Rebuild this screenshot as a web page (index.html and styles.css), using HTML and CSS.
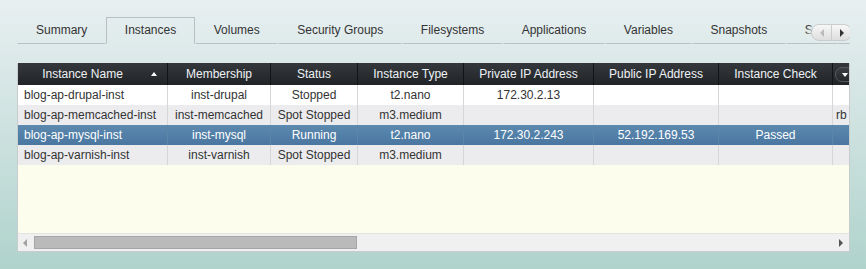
FILE: index.html
```html
<!DOCTYPE html>
<html lang="en">
<head>
    <meta charset="UTF-8">
    <title>Instances</title>
    <link rel="stylesheet" href="styles.css">
</head>
<body>
<div class="panel">
    <div class="tabbar">
        <div class="tabs">
            <div class="tab">Summary</div>
            <div class="tab active">Instances</div>
            <div class="tab">Volumes</div>
            <div class="tab">Security Groups</div>
            <div class="tab">Filesystems</div>
            <div class="tab">Applications</div>
            <div class="tab">Variables</div>
            <div class="tab">Snapshots</div>
            <div class="tab">Se</div>
            <div class="tab-fill"></div>
        </div>
        <div class="tab-scroller">
            <span class="scroll-btn"><i class="tri left"></i></span>
            <span class="scroll-btn"><i class="tri right"></i></span>
        </div>
    </div>

    <div class="grid">
        <div class="grid-view">
            <table>
                <colgroup>
                    <col style="width:150px"><col style="width:103px"><col style="width:87px">
                    <col style="width:106px"><col style="width:130px"><col style="width:125px">
                    <col style="width:114px"><col style="width:17px">
                </colgroup>
                <thead>
                    <tr>
                        <th><div class="th-sort"><span>Instance Name</span><i class="sort-up"></i></div></th>
                        <th>Membership</th>
                        <th>Status</th>
                        <th>Instance Type</th>
                        <th>Private IP Address</th>
                        <th>Public IP Address</th>
                        <th>Instance Check</th>
                        <th></th>
                    </tr>
                </thead>
                <tbody>
                    <tr>
                        <td class="name">blog-ap-drupal-inst</td><td>inst-drupal</td><td>Stopped</td><td>t2.nano</td>
                        <td>172.30.2.13</td><td></td><td></td><td class="left"></td>
                    </tr>
                    <tr class="alt">
                        <td class="name">blog-ap-memcached-inst</td><td>inst-memcached</td><td>Spot Stopped</td><td>m3.medium</td>
                        <td></td><td></td><td></td><td class="left">rb</td>
                    </tr>
                    <tr class="selected">
                        <td class="name">blog-ap-mysql-inst</td><td>inst-mysql</td><td>Running</td><td>t2.nano</td>
                        <td>172.30.2.243</td><td>52.192.169.53</td><td>Passed</td><td class="left"></td>
                    </tr>
                    <tr class="alt">
                        <td class="name">blog-ap-varnish-inst</td><td>inst-varnish</td><td>Spot Stopped</td><td>m3.medium</td>
                        <td></td><td></td><td></td><td class="left"></td>
                    </tr>
                </tbody>
            </table>
            <div class="col-menu"><i class="tri down"></i></div>
        </div>
        <div class="hscroll">
            <i class="tri left muted"></i>
            <div class="track"><div class="thumb"></div></div>
            <i class="tri right"></i>
        </div>
    </div>
</div>
</body>
</html>
```

FILE: styles.css
```css
body {
    margin: 0;
    height: 269px;
    overflow: hidden;
    background: linear-gradient(#e8eff1, #b0d3cc);
    font-family: 'Liberation Sans', Arial, sans-serif;
    font-size: 12px;
    color: #333;
}
.panel {
    padding: 17px 0 0 17px;
    width: 833px;
}

/* tabs */
.tabbar {
    position: relative;
    height: 27px;
    overflow: hidden;
}
.tabs {
    display: flex;
    white-space: nowrap;
}
.tab {
    flex-shrink: 0;
    padding: 0 17.5px 0 18px;
    line-height: 25px;
    border: 1px solid transparent;
    border-bottom-color: #b9c3c5;
    cursor: pointer;
}
.tab.active {
    border-color: #b7bfc1;
    border-bottom-color: transparent;
}
.tab-fill {
    flex: 1;
    border-bottom: 1px solid #b9c3c5;
}
.tab-scroller {
    position: absolute;
    left: 794px;
    top: 7px;
    display: flex;
    height: 15px;
    border: 1px solid #c9cdcd;
    border-radius: 8px;
    background: linear-gradient(#f7f7f7, #dedede);
    box-shadow: -3px 0 3px rgba(230, 238, 240, 0.7);
}
.scroll-btn {
    display: flex;
    align-items: center;
    justify-content: center;
    width: 19px;
}
.scroll-btn + .scroll-btn {
    border-left: 1px solid #c9cdcd;
}

/* little triangles */
.tri {
    display: block;
    width: 0;
    height: 0;
    border: 4px solid transparent;
}
.tri.left {
    border-left: none;
    border-right-color: #bbb;
}
.tri.right {
    border-right: none;
    border-left-color: #333;
}
.tri.down {
    border-width: 4px 3px 0;
    border-top-color: #fff;
}

/* grid */
.grid {
    margin-top: 19px;
    border: 1px solid #c8cccc;
    border-top: none;
    background: #fdfded;
}
.grid-view {
    position: relative;
    height: 170px;
    overflow: hidden;
}
table {
    table-layout: fixed;
    width: 832px;
    border-collapse: separate;
    border-spacing: 0;
}
th, td {
    box-sizing: border-box;
    white-space: nowrap;
    overflow: hidden;
    text-align: center;
}
th {
    height: 22px;
    padding: 0 4px;
    font-weight: normal;
    color: #eef2f6;
    background: linear-gradient(#34383c, #212427);
    border-right: 1px solid #121416;
}
.th-sort {
    display: flex;
    align-items: center;
}
.th-sort span {
    flex: 1;
    padding-right: 8px;
}
.sort-up {
    margin-right: 6px;
    border: 3px solid transparent;
    border-top: none;
    border-bottom: 4px solid #fff;
}
td {
    height: 20px;
    padding: 0 4px;
    background: #fff;
    border-right: 1px solid #d6d6d6;
}
td.name {
    text-align: left;
    padding-left: 6px;
}
td.left {
    text-align: left;
    padding: 0 0 0 3px;
    overflow: hidden;
}
tr.alt td {
    background: #ececef;
}
tr.selected td {
    color: #fff;
    background: linear-gradient(#5b89af, #4a76a0);
    border-right-color: #5b86aa;
}
.col-menu {
    position: absolute;
    left: 817px;
    top: 4px;
    display: flex;
    align-items: center;
    justify-content: center;
    width: 18px;
    height: 13px;
    border: 1px solid #55595d;
    border-radius: 7px;
    background: linear-gradient(#3b3f43, #25282b);
}

/* horizontal scrollbar */
.hscroll {
    display: flex;
    align-items: center;
    height: 18px;
    background: #f0f0f0;
    border-top: 1px solid #e4e4e4;
    box-sizing: border-box;
}
.hscroll .tri.left {
    margin: 0 7px 0 5px;
    border-right-color: #a2a2a2;
}
.hscroll .tri.right {
    margin: 0 6px 0 4px;
    border-left-color: #555;
}
.track {
    flex: 1;
}
.thumb {
    width: 323px;
    height: 13px;
    box-sizing: border-box;
    background: #bababa;
    border: 1px solid #a6a6a6;
}
```
